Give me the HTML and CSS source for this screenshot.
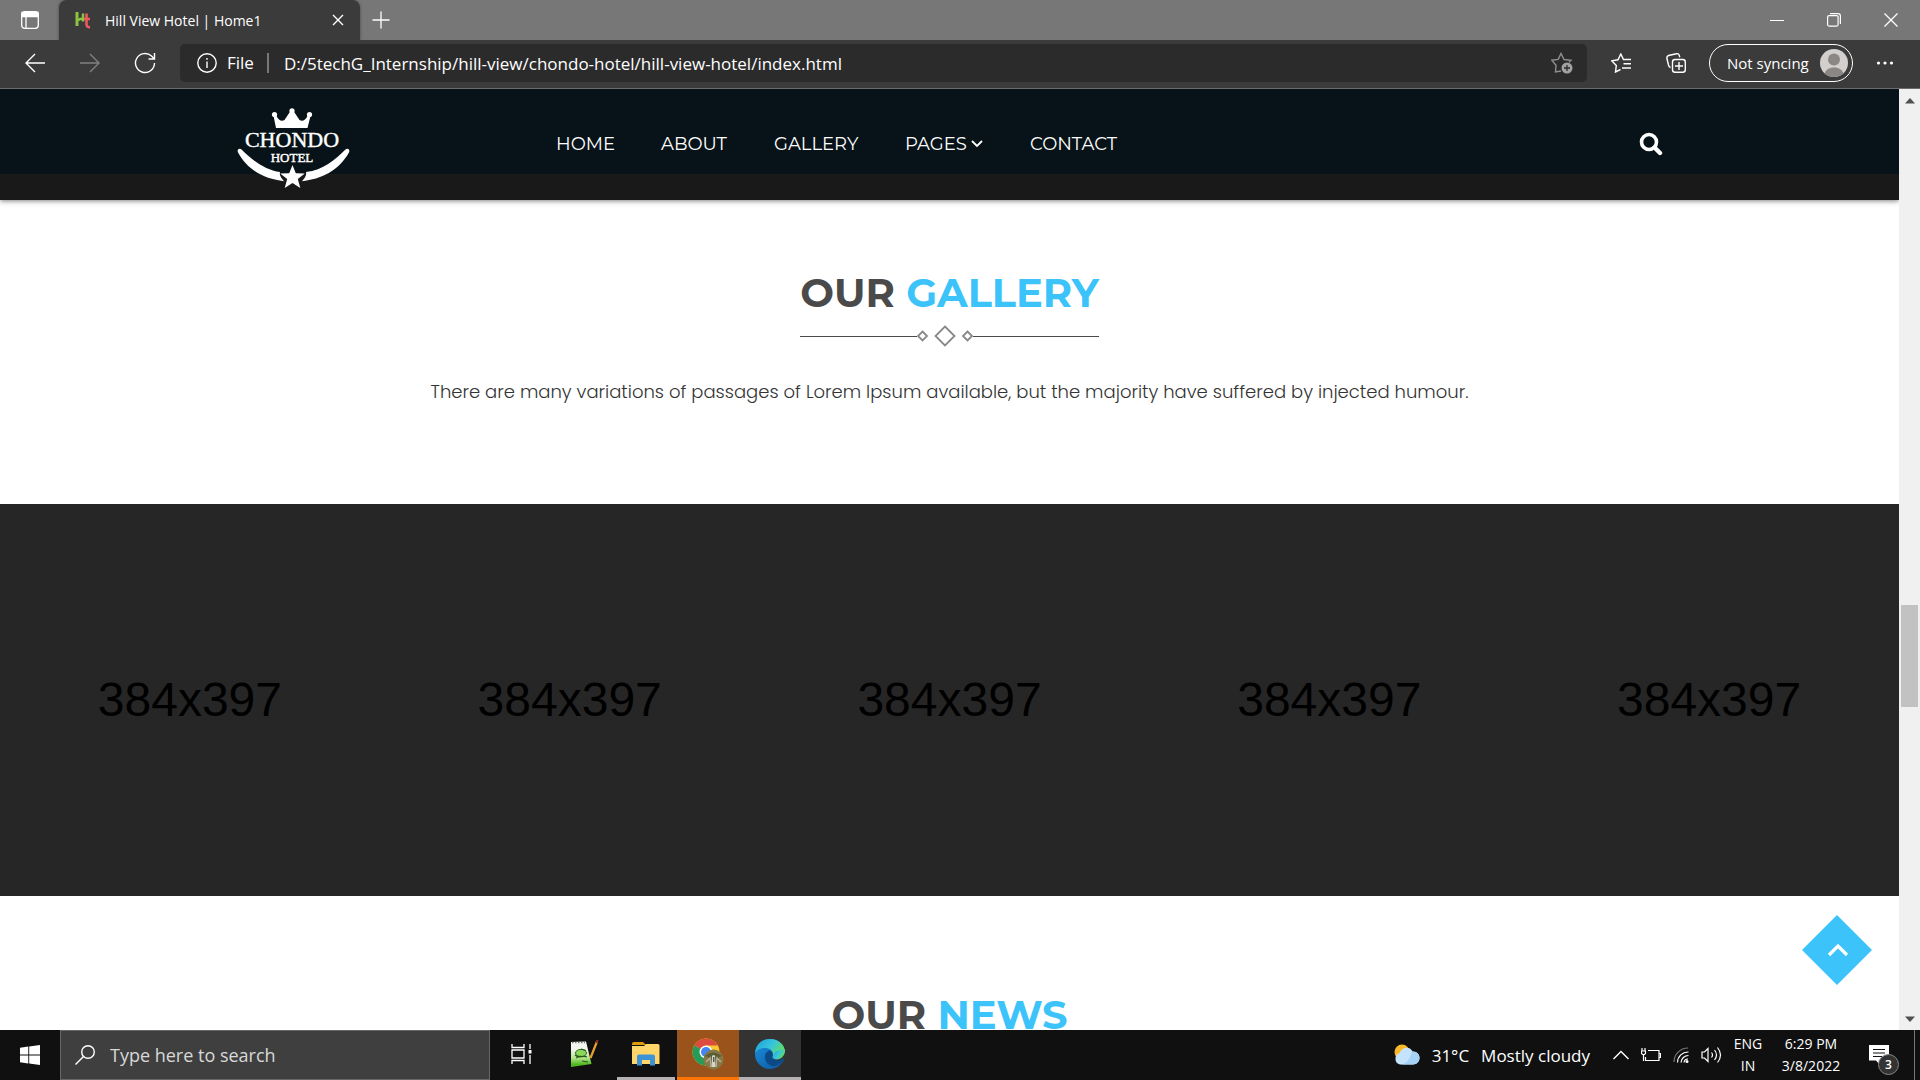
FILE: index.html
```html
<!DOCTYPE html>
<html lang="en">
<head>
<meta charset="utf-8">
<title>Hill View Hotel | Home1</title>
<link rel="stylesheet" href="styles.css">
</head>
<body>
<div class="tabstrip">
  <button class="tab-actions" aria-label="Tab actions">
    <svg width="20" height="20" viewBox="0 0 20 20" fill="none" stroke="#fff" stroke-width="1.3"><rect x="1.7" y="1.7" width="16.6" height="16.6" rx="3"/><path d="M2 2.500h16v4H2z" fill="#fff"/><path d="M6 6v12"/></svg>
  </button>
  <div class="tab">
    <svg width="16" height="18" viewBox="0 0 16 18" fill="none" stroke-width="3"><path d="M2 1v14" stroke="#8bc53f"/><path d="M3 9.500c2-2.500 3.500-1.500 5.500-2M8 2.500v8" stroke="#8bc53f" stroke-width="2.400"/><path d="M11.500 2.500v10.500c0 2.500 1 3.500 3.500 3M9 8h6" stroke="#ee5a5f" stroke-width="2.600"/></svg>
    <span class="tab-title">Hill View Hotel | Home1</span>
    <button class="tab-close" aria-label="Close tab"><svg width="12" height="12" viewBox="0 0 12 12" stroke="#fff" stroke-width="1.400"><path d="M1 1l10 10M11 1L1 11"/></svg></button>
  </div>
  <button class="new-tab" aria-label="New tab"><svg width="18" height="18" viewBox="0 0 18 18" stroke="#fff" stroke-width="1.300"><path d="M9 .5v17M.5 9h17"/></svg></button>
  <div class="window-controls">
    <button aria-label="Minimize"><svg width="14" height="14" viewBox="0 0 14 14" stroke="#fff"><path d="M0 7.500h14"/></svg></button>
    <button aria-label="Restore"><svg width="14" height="14" viewBox="0 0 14 14" fill="none" stroke="#fff" stroke-width="1.200"><rect x=".6" y="2.600" width="10.500" height="10.500" rx="1.500"/><path d="M3 .6h8a2.400 2.400 0 0 1 2.400 2.400v8"/></svg></button>
    <button aria-label="Close"><svg width="14" height="14" viewBox="0 0 14 14" stroke="#fff" stroke-width="1.300"><path d="M.5 .5l13 13M13.500 .5l-13 13"/></svg></button>
  </div>
</div>

<div class="toolbar">
  <button class="nav-button" aria-label="Back"><svg width="20" height="20" viewBox="0 0 20 20" fill="none" stroke="#fff" stroke-width="1.400"><path d="M20 10H1M10 1l-9 9 9 9"/></svg></button>
  <button class="nav-button" aria-label="Forward"><svg width="20" height="20" viewBox="0 0 20 20" fill="none" stroke="#818181" stroke-width="1.400"><path d="M0 10h19M10 1l9 9-9 9"/></svg></button>
  <button class="nav-button" aria-label="Refresh"><svg width="22" height="22" viewBox="0 0 22 22" fill="none" stroke="#fff" stroke-width="1.400"><path d="M20.500 11A9.500 9.500 0 1 1 17.500 4.100L20 6.500M20.500 1v6h-6"/></svg></button>
  <div class="address">
    <svg width="20" height="20" viewBox="0 0 20 20" fill="none" stroke="#fff" stroke-width="1.400"><circle cx="10" cy="10" r="9.200"/><path d="M10 8.500V15M10 5v1.800"/></svg>
    <label class="scheme" for="url">File</label>
    <input class="url" id="url" type="text" value="D:/5techG_Internship/hill-view/chondo-hotel/hill-view-hotel/index.html">
    <button aria-label="Add this page to favorites"><svg width="22" height="22" viewBox="0 0 22 22"><path d="M10 19l-5.500 1L5 13.200.8 8.200l6.400-.8L10 1.500l3 6 7 .8-2 2" fill="none" stroke="#8f8f8f" stroke-width="1.400"/><circle cx="16" cy="16" r="5.500" fill="#a2a2a2"/><path d="M16 13v6M13 16h6" stroke="#2b2b2b" stroke-width="1.300"/></svg></button>
  </div>
  <div class="toolbar-actions">
    <button class="action" aria-label="Favorites"><svg width="20" height="20" viewBox="0 0 20 20" fill="none" stroke="#fff" stroke-width="1.400"><path d="M9.500 16.500L4.500 19l.8-6.500L.8 7.800l6.200-1L9.800 1l2.700 5.500H20M12.500 10.800H20M11 15h9"/></svg></button>
    <button class="action" aria-label="Collections"><svg width="20" height="20" viewBox="0 0 20 20" fill="none" stroke="#fff" stroke-width="1.400"><rect x="6.500" y="6.500" width="12.800" height="12.800" rx="2.500"/><path d="M13 9v8M9 13h8M4.500 14.500C3 14 2.800 13 2.500 12L.9 5.500C.6 3.800 1.200 3 2.500 2.500l8-1.800c1.500-.3 2.300.3 2.700 1.500l.6 2"/></svg></button>
    <button class="profile">Not syncing
      <svg width="28" height="28" viewBox="0 0 28 28"><circle cx="14" cy="14" r="14" fill="#d2d0ce"/><circle cx="14" cy="10.500" r="6" fill="#8a8785"/><path d="M4.500 24.200C6.500 20 10 18.500 14 18.500s7.500 1.500 9.500 5.700A14 14 0 0 1 4.500 24.200z" fill="#8a8785"/></svg>
    </button>
    <button class="more" aria-label="Settings and more"><svg width="18" height="4" viewBox="0 0 18 4" fill="#fff"><circle cx="2.500" cy="2" r="1.600"/><circle cx="9" cy="2" r="1.600"/><circle cx="15.500" cy="2" r="1.600"/></svg></button>
  </div>
</div>

<div class="viewport">
  <div class="page">
    <header class="site-header">
      <a class="logo" href="#" aria-label="Chondo Hotel">
        <svg width="114" height="82" viewBox="0 0 114 82" fill="#fff">
          <path d="M39 20L36.500 8l3 0c2 4 5 6 8 4l6-9h3l6 9c3 2 6 0 8-4h3L70.500 20z"/><circle cx="37.500" cy="6.500" r="2.600"/><circle cx="55" cy="2.800" r="2.600"/><circle cx="72.500" cy="6.500" r="2.600"/>
          <text class="logo-name" x="55" y="39">CHONDO</text>
          <text class="logo-sub" x="55" y="54">HOTEL</text>
          <path d="M.8 44c-.8-3 2-4 4-2.300C15 52 28 62 43 64c-1 4 2 7 4 9.200C28 71 11 63 .8 44zM112.200 44c.8-3-2-4-4-2.300C98 52 86 62 69 64c1 4-2 7-4 9.200C84 71 102 63 112.200 44z"/>
          <path d="M55.500 57l3.300 8.200 9 .3-7 5.500 2.500 9-7.800-5-7.800 5 2.500-9-7-5.500 9-.3z"/>
        </svg>
      </a>
      <nav class="menu">
        <a href="#">HOME</a><a href="#">ABOUT</a><a href="#">GALLERY</a><a href="#">PAGES <svg width="12" height="8" viewBox="0 0 12 8" fill="none" stroke="#fff" stroke-width="1.800"><path d="M1 1l5 5 5-5"/></svg></a><a href="#">CONTACT</a>
      </nav>
      <button class="site-search" aria-label="Search"><svg width="24" height="24" viewBox="0 0 24 24" fill="none" stroke="#fff"><circle cx="10" cy="10" r="7.500" stroke-width="3.600"/><path d="M15.500 15.500L21 21" stroke-width="4.400" stroke-linecap="round"/></svg></button>
    </header>

    <section class="section">
      <div class="heading">
        <h2>OUR <span>GALLERY</span></h2>
        <div class="divider">
          <svg width="56" height="22" viewBox="0 0 56 22" fill="none" stroke="#888" stroke-width="1.800"><path d="M5.500 6.500l4.500 4.500-4.500 4.500L1 11zM28 1.500l9.500 9.500-9.500 9.500L18.500 11zM50.500 6.500L55 11l-4.500 4.500L46 11z"/></svg>
        </div>
      </div>
      <p>There are many variations of passages of Lorem Ipsum available, but the majority have suffered by injected humour.</p>
    </section>

    <section class="gallery">
      <a href="#">384x397</a><a href="#">384x397</a><a href="#">384x397</a><a href="#">384x397</a><a href="#">384x397</a>
    </section>

    <section class="section section-news">
      <div class="heading"><h2>OUR <span>NEWS</span></h2></div>
    </section>

    <a class="to-top" href="#" aria-label="Back to top">
      <svg width="70" height="70" viewBox="0 0 70 70"><path d="M35 0l35 35-35 35L0 35z" fill="#3cc3fa"/><path d="M27 40l9-9 9 9" fill="none" stroke="#fff" stroke-width="3.200"/></svg>
    </a>
  </div>
  <div class="scrollbar">
    <svg width="10" height="6" viewBox="0 0 10 6" fill="#505050"><path d="M5 0l5 5.500H0z"/></svg>
    <div class="track"><div class="thumb"></div></div>
    <svg width="10" height="6" viewBox="0 0 10 6" fill="#505050"><path d="M5 6L0 .5h10z"/></svg>
  </div>
</div>

<div class="taskbar">
  <button class="start" aria-label="Start"><svg width="20" height="20" viewBox="0 0 20 20" fill="#fff"><path d="M0 2.800l8.300-1.200v7.900H0zM9.200 1.500L20 0v9.500H9.200zM0 10.400h8.300v8L0 17.200zM9.200 10.400H20V20L9.200 18.500z"/></svg></button>
  <label class="search">
    <svg width="20" height="20" viewBox="0 0 20 20" fill="none" stroke="#fff" stroke-width="1.400"><circle cx="13" cy="7" r="6.300"/><path d="M8.500 11.500L.5 19.500"/></svg>
    <input type="text" placeholder="Type here to search" aria-label="Type here to search">
  </label>
  <div class="apps">
    <button class="app" aria-label="Task view"><svg width="22" height="20" viewBox="0 0 22 20" fill="none" stroke="#fff" stroke-width="1.300"><path d="M1 0v3.500h12V0M1 6h12v8H1zM1 20v-3.500h12V20M19 0v5M19 11v9"/><path d="M17.500 6h3v3.500h-3z" fill="#fff" stroke="none"/></svg></button>
    <button class="app" aria-label="Notepad++"><svg width="30" height="28" viewBox="0 0 30 28"><defs><linearGradient id="pad" x1="0" y1="0" x2="0" y2="1"><stop offset=".3" stop-color="#f3f6ee"/><stop offset=".65" stop-color="#b5e48c"/><stop offset=".9" stop-color="#4fb81e"/></linearGradient></defs><path d="M2 2l15-.5 5.500 22.500L2 27z" fill="url(#pad)"/><path d="M3 2.500h13" stroke="#777" stroke-width="1.500" stroke-dasharray="1.500 1.500"/><ellipse cx="12" cy="13" rx="5.500" ry="3.600" fill="#8bd85a" stroke="#2e6a1e"/><path d="M6 15c4 4 8 0 12 2M12 9l5 1.500M7 18l5-2M13 21l6 1" stroke="#245a16" fill="none" stroke-width="1.200"/><path d="M28 1.500L21.500 18" stroke="#e7a12c" stroke-width="2.200"/><path d="M28.600 0l-1.200 3" stroke="#8e2c20" stroke-width="2.200"/></svg></button>
    <button class="app open" aria-label="File Explorer"><svg width="28" height="24" viewBox="0 0 28 24"><path d="M0 2q0-2 2-2h9l3 3H0z" fill="#e09b0d"/><path d="M0 4h12l2-2h12q1.500 0 1.500 1.500V22H0z" fill="#ffd667"/><path d="M5 23.500v-9q0-2 2-2h14q2 0 2 2v9h-5V18h-8v5.500z" fill="#3d93d6"/></svg></button>
    <button class="app alert" aria-label="Google Chrome"><svg width="32" height="32" viewBox="0 0 32 32"><circle cx="14" cy="14" r="13.500" fill="#f9c932"/><path d="M14 14L2.300 7.200A13.500 13.500 0 0 1 25.700 7.500H14z" fill="#dd4b3e"/><path d="M14 14L2.300 7.200A13.500 13.500 0 0 0 13 27.500l6-9z" fill="#279b57"/><circle cx="14" cy="14" r="6.500" fill="#fff"/><circle cx="14" cy="14" r="5" fill="#4384f3"/><circle cx="21.500" cy="21.500" r="10" fill="#867747"/><path d="M13 18q8-7 17 0l-3 1-3 10h-5l-3-10z" fill="#5b5d35"/><path d="M14 24l4-4 1 9M29 24l-4-4-1 9" stroke="#b7ad93" stroke-width="1.500" fill="none"/><path d="M20 18q2-2 3 0l.5 11h-4z" fill="#d6d4ca"/><path d="M21.300 19h1v5h-1z" fill="#222"/></svg></button>
    <button class="app active" aria-label="Microsoft Edge"><svg width="30" height="30" viewBox="0 0 30 30"><defs><linearGradient id="edgeTop" x1="0" y1="0" x2="1" y2=".5"><stop offset="0" stop-color="#219fd5"/><stop offset=".55" stop-color="#35c4df"/><stop offset="1" stop-color="#65de58"/></linearGradient><linearGradient id="edgeSide" x1="0" y1="0" x2="1" y2="1"><stop offset="0" stop-color="#1b91dc"/><stop offset="1" stop-color="#0b55a1"/></linearGradient></defs><circle cx="15" cy="15" r="15" fill="url(#edgeSide)"/><path d="M0 14C1 5 7 0 15 0c9 0 15 6 15 13 0 5-4 7.500-8 7.500-3.500 0-5-1.500-4.500-3 1.500-4-1-8-7-8.500C6 9 2 11 0 14z" fill="url(#edgeTop)"/><path d="M17.500 17.500c1-3-.5-5.500-3-6-3 1-5 4-4.500 7.500.5 5 5 9 10 8 4-1 7-3.500 9-7 1-1 0-1.500-1-1-3 2-9 2-10.500-1.500z" fill="#0b4a86"/><path d="M17.300 17.500c1 4 6 5 10 2.300 2-1 3-.8 3.500-1.800V13z" fill="#333"/><path d="M30 10c.5 6-3.500 10.500-8 10.500-3.500 0-5-1.500-4.500-3l3-5z" fill="url(#edgeTop)"/></svg></button>
  </div>
  <div class="tray">
    <button class="weather">
      <svg width="26" height="22" viewBox="0 0 26 22"><circle cx="8" cy="8" r="7.500" fill="#f9b928"/><path d="M6 20.500a6 6 0 0 1-.5-11.500C8 2.500 16.500 2 18.500 7.500c4.500-.3 7 3 7 6.300 0 4-3 6.700-6.500 6.700z" fill="#c5e3fb"/><path d="M6 20.500c7 0 9-5 12.500-13 4.500-.3 7 3 7 6.300 0 4-3 6.700-6.500 6.700z" fill="#a5d1f5"/></svg>
      <span>31°C</span><span>Mostly cloudy</span>
    </button>
    <button aria-label="Show hidden icons"><svg width="16" height="10" viewBox="0 0 16 10" fill="none" stroke="#fff" stroke-width="1.400"><path d="M.5 9L8 1.500 15.500 9"/></svg></button>
    <button aria-label="Battery"><svg width="20" height="14" viewBox="0 0 20 14" fill="none" stroke="#fff" stroke-width="1.200"><path d="M7 2.500h11v10H4.500V9M18.500 5.500h1v4h-1M2.500 6.500V13M1 0v3M4 0v3M.5 3h4v2.500l-1 1h-2l-1-1z"/></svg></button>
    <button aria-label="Network"><svg width="16" height="16" viewBox="0 0 16 16" fill="none" stroke="#fff" stroke-width="1.200"><path d="M1 15A14 14 0 0 1 15 1" stroke="#777"/><path d="M4.500 15.500A10.500 10.500 0 0 1 15.500 5M8 15.500A7.500 7.500 0 0 1 15.500 8.500M11 15.500a4 4 0 0 1 4-3.500"/><circle cx="14" cy="14.500" r="1.500" fill="#fff" stroke="none"/></svg></button>
    <button aria-label="Volume"><svg width="21" height="18" viewBox="0 0 21 18" fill="none" stroke="#fff" stroke-width="1.200"><path d="M1 6h2.500L7 2.500v13L3.500 12H1zM10.500 6.500q2 2.500 0 5M13.500 4q4 5 0 10M16.500 1.500q6 7.500 0 15"/></svg></button>
    <button class="stack language"><span>ENG</span><span>IN</span></button>
    <button class="stack clock"><span>6:29 PM</span><span>3/8/2022</span></button>
    <button class="notifications" aria-label="3 new notifications"><svg width="20" height="20" viewBox="0 0 20 20"><path d="M0 0h20v15.500h-8.500L10 19l-3-3.500H0z" fill="#fff"/><path d="M4 4.500h12M4 8h12M4 11.500h9" stroke="#111"/></svg><span class="badge">3</span></button>
  </div>
</div>
</body>
</html>
```
FILE: styles.css
```css
* { box-sizing: border-box; }

body {
  margin: 0;
  height: 100vh;
  display: flex;
  flex-direction: column;
  overflow: hidden;
  background: #fff;
  font-family: "Segoe UI", "Open Sans", sans-serif;
  color: #fff;
}

button, input { font: inherit; color: inherit; background: none; border: 0; padding: 0; margin: 0; outline: 0; }
button { display: flex; align-items: center; justify-content: center; flex: none; }
a { color: inherit; text-decoration: none; }
svg { display: block; flex: none; }

/* Browser tabs */
.tabstrip { flex: none; height: 40px; display: flex; background: #777; }
.tab-actions { width: 59px; }
.tab {
  width: 301px;
  display: flex;
  align-items: center;
  padding: 0 16px;
  background: #3b3b3b;
  border-radius: 8px 8px 0 0;
  box-shadow: 0 0 3px #444;
}
.tab-title { flex: 1; margin-left: 14px; font-size: 14px; white-space: nowrap; }
.new-tab { width: 42px; }
.window-controls { margin-left: auto; padding-right: 1px; display: flex; }
.window-controls button { width: 57px; }

/* Browser toolbar */
.toolbar {
  flex: none;
  height: 49px;
  display: flex;
  align-items: center;
  padding: 0 26px 2px 7px;
  background: #3b3b3b;
  border-bottom: 1px solid #6c6c6c;
}
.nav-button { width: 55px; height: 38px; }
.address {
  flex: 1;
  height: 38px;
  margin-left: 8px;
  padding: 0 14px 0 17px;
  display: flex;
  align-items: center;
  background: #2b2b2b;
  border-radius: 5px;
  font-size: 17px;
}
.scheme { margin-left: 10px; padding-right: 13px; line-height: 20px; border-right: 2px solid #777; }
.url { flex: 1; margin-left: 15px; }
.toolbar-actions { display: flex; align-items: center; }
.action { width: 55px; height: 38px; }
.action:first-child { margin-left: 6px; }
.profile {
  width: 144px;
  height: 38px;
  margin-left: 6px;
  padding: 0 4px 0 17px;
  justify-content: space-between;
  border: 1px solid #fff;
  border-radius: 19px;
  font-size: 15px;
}
.more { margin-left: 23px; }

/* Browser viewport */
.viewport { flex: 1; min-height: 0; display: flex; }
.page { flex: 1; position: relative; overflow: hidden; }
.scrollbar {
  width: 21px;
  padding: 9px 0 8px;
  display: flex;
  flex-direction: column;
  align-items: center;
  background: #f0f0f0;
}
.track { flex: 1; width: 17px; }
.thumb { height: 102px; margin-top: 501px; background: #c2c2c2; }

/* Site header */
.site-header {
  height: 111px;
  padding: 0 236px 0 237px;
  display: flex;
  align-items: flex-start;
  background: linear-gradient(#071318 85px, #191919 85px);
  box-shadow: 0 1px 5px rgba(0, 0, 0, .5);
  font-family: Montserrat, Inter, sans-serif;
}
.logo { margin-top: 19px; }
.logo-name, .logo-sub { font-family: "Liberation Serif", serif; text-anchor: middle; stroke: #fff; stroke-width: .4px; }
.logo-name { font-size: 22px; }
.logo-sub { font-size: 13px; }
.menu {
  margin: 45px auto 0 205px;
  display: grid;
  grid-template-columns: 105px 113px 131px 125px auto;
  font-size: 18px;
  line-height: 20px;
}
.menu a { display: flex; align-items: center; gap: 4px; }
.site-search { margin-top: 43px; }

/* Site sections */
.section {
  padding: 69px 24px 0;
  display: flex;
  flex-direction: column;
  align-items: center;
  color: #4a4a4a;
}
.heading { display: flex; flex-direction: column; }
h2 {
  margin: 0;
  font: 700 40px/48px Montserrat, Inter, sans-serif;
  text-align: center;
}
h2 span { color: #3cc3fa; }
.divider { display: flex; align-items: center; margin-top: 8px; }
.divider::before, .divider::after { content: ""; flex: 1 1 0; height: 1px; background: #4a4a4a; }
.divider::after { flex-basis: 10px; }
.section p {
  margin: 31px 0 98px;
  font: 300 18px/28px Poppins, Inter, sans-serif;
  color: #333;
}
.gallery { display: grid; grid-template-columns: repeat(5, 1fr); background: #262626; }
.gallery a {
  height: 392px;
  padding-bottom: 2px;
  display: grid;
  place-items: center;
  font: 48px "Liberation Sans", Arial, sans-serif;
  color: #000;
}
.section-news { padding-top: 95px; }
.to-top { position: absolute; right: 27px; bottom: 45px; }

/* Taskbar */
.taskbar { flex: none; height: 50px; display: flex; background: #101010; }
.start { width: 60px; }
.search {
  width: 430px;
  padding: 0 14px;
  display: flex;
  align-items: center;
  gap: 15px;
  background: #3f3f3f;
  border: 1px solid #676767;
}
.search input { flex: 1; font-size: 18px; }
.search input::placeholder { color: #d8d8d8; opacity: 1; }
.apps { display: flex; padding-left: 1px; }
.app { width: 62px; border-bottom: 3px solid transparent; }
.app.open { border-image: linear-gradient(90deg, transparent 5px, #b4b0b3 5px calc(100% - 5px), transparent calc(100% - 5px)) 3; }
.app.alert { background: #99531b; border-color: #ff7300; }
.app.active { background: #333; border-color: #b4b0b3; }
.tray { margin-left: auto; padding-right: 5px; display: flex; gap: 12px; }
.weather { gap: 12px; margin-right: 11px; font-size: 17px; }
.stack { flex-direction: column; font-size: 14px; line-height: 22px; }
.language { width: 28px; }
.clock { width: 74px; }
.notifications {
  width: 55px;
  padding-left: 9px;
  justify-content: flex-start;
  position: relative;
  border-right: 1px solid #777;
}
.badge {
  position: absolute;
  left: 18px;
  top: 24px;
  width: 21px;
  height: 21px;
  border: 1px solid #888;
  border-radius: 50%;
  background: #333;
  font-size: 12px;
  font-weight: 600;
  line-height: 19px;
}
```
